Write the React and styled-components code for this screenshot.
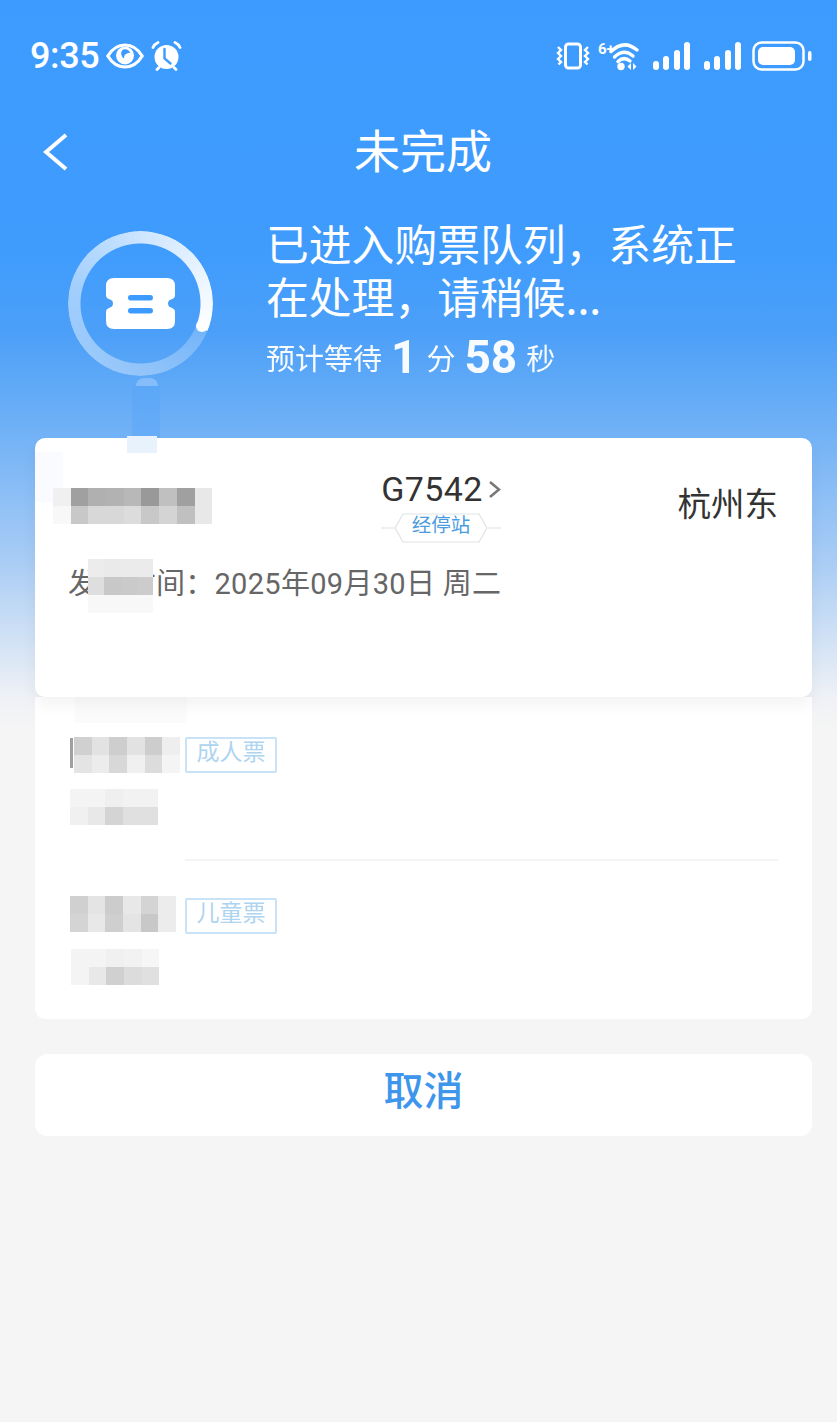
import React from "react";
import styled, { createGlobalStyle } from "styled-components";

const GlobalStyle = createGlobalStyle`
  html, body { margin: 0; padding: 0; }
  body {
    background: #f5f5f5;
    font-family: Roboto, "Noto Sans CJK SC", sans-serif;
  }
`;

const EyeIcon = () => (
  <svg width="38" height="26" viewBox="0 0 38 26">
    <path d="M1.800 13C6 6 12 2 19 2s13 4 17.200 11C32 20 26 24 19 24S6 20 1.800 13z" fill="none" stroke="#fff" strokeWidth="3.200" />
    <circle cx="19" cy="12.500" r="9" fill="#fff" />
    <path d="M17 6.500a6.500 6.500 0 0 1 7.500 3.500a4.500 4.500 0 0 0-3.500.5 4 4 0 0 0-2.800 5 5.500 5.500 0 0 1-1.200-9z" fill="#3d9bff" />
  </svg>
);

const AlarmIcon = () => (
  <svg width="31" height="30" viewBox="0 0 31 30">
    <circle cx="15.500" cy="16" r="12" fill="#fff" />
    <path d="M13.500 8v9.500l6 5" fill="none" stroke="#3d9bff" strokeWidth="2.400" strokeLinecap="round" />
    <path d="M2 6.500Q3.500 3 7 1.500M29 6.500Q27.500 3 24 1.500" fill="none" stroke="#fff" strokeWidth="2.800" strokeLinecap="round" />
    <path d="M6 28.500l2-2M25 28.500l-2-2" stroke="#fff" strokeWidth="2.800" strokeLinecap="round" />
  </svg>
);

const VibrateIcon = () => (
  <svg width="34" height="28" viewBox="0 0 34 28">
    <rect x="9.500" y="2" width="15" height="24" rx="3" fill="none" stroke="#fff" strokeWidth="3" />
    <path d="M2 5l3 3-3 3 3 3-3 3 3 3-2.500 2.500M32 5l-3 3 3 3-3 3 3 3-3 3 2.500 2.500" fill="none" stroke="#fff" strokeWidth="2.400" />
  </svg>
);

const WifiIcon = () => (
  <svg width="42" height="30" viewBox="0 0 42 30">
    <text x="0" y="13" fill="#fff" fontSize="15" fontWeight="700" fontFamily="Roboto, sans-serif">6+</text>
    <path d="M13 10.500Q26-2 39 9" fill="none" stroke="#fff" strokeWidth="3.400" strokeLinecap="round" />
    <path d="M16.500 16Q26 7 35 15" fill="none" stroke="#fff" strokeWidth="3.400" strokeLinecap="round" />
    <path d="M20 20.500Q26 15 32 20" fill="none" stroke="#fff" strokeWidth="3.400" strokeLinecap="round" />
    <circle cx="23" cy="25.500" r="3.700" fill="#fff" />
    <path d="M33 22v7l-3.500-3.500zM35 22v7l3.500-3.500z" fill="#fff" />
  </svg>
);

const SignalIcon = () => (
  <svg width="37" height="28" viewBox="0 0 37 28">
    <rect x="0" y="19" width="6" height="9" rx="3" fill="#fff" />
    <rect x="10" y="14" width="6" height="14" rx="3" fill="#fff" />
    <rect x="21" y="8" width="6" height="20" rx="3" fill="#fff" />
    <rect x="31" y="0" width="6" height="28" rx="3" fill="#fff" />
  </svg>
);

const BatteryIcon = () => (
  <svg width="60" height="30" viewBox="0 0 60 30">
    <rect x="1.500" y="1.500" width="50" height="27" rx="8" fill="none" stroke="#fff" strokeWidth="2.500" />
    <rect x="6" y="6" width="37" height="18" rx="5" fill="#fff" />
    <rect x="56" y="10" width="3.500" height="10" rx="1.750" fill="#fff" />
  </svg>
);

const BackIcon = () => (
  <svg width="26" height="38" viewBox="0 0 26 38">
    <path d="M23 2L3 19l20 17" fill="none" stroke="#fff" strokeWidth="4" />
  </svg>
);

const TicketIcon = () => (
  <svg width="69" height="51" viewBox="0 0 69 51">
    <path
      d="M8 0H61Q69 0 69 8V17Q69 20 66 21L63 22.500Q61 25.500 63 28.500L66 30Q69 31 69 34V43Q69 51 61 51H8Q0 51 0 43V34Q0 31 3 30L6 28.500Q8 25.500 6 22.500L3 21Q0 20 0 17V8Q0 0 8 0z"
      fill="#fff"
    />
    <rect x="22" y="17" width="25" height="5.500" rx="2.700" fill="#3d9bff" />
    <rect x="22" y="30" width="25" height="5.500" rx="2.700" fill="#3d9bff" />
  </svg>
);

const StopsBadgeFrame = () => (
  <svg width="124" height="30" viewBox="0 0 124 30">
    <path d="M2 15H15M109 15H122" stroke="#ececec" strokeWidth="1.500" />
    <path d="M24 1H100L108 15L100 29H24L16 15z" fill="#fff" stroke="#dfe3e6" strokeWidth="1.200" />
  </svg>
);

const RIGHT_CHEVRON = (
  <svg width="13" height="19" viewBox="0 0 13 19">
    <path d="M2 2l9 7.500-9 7.500" fill="none" stroke="#777" strokeWidth="2.500" />
  </svg>
);

const stationMosaic = [
  "#f0f0f0", "#a0a0a0", "#b0b0b0", "#b2b2b2", "#b8b8b8", "#999999", "#c0c0c0", "#a0a0a0", "#e8e8e8",
  "#f8f8f8", "#c8c8c8", "#d8d8d8", "#d8d8d8", "#dcdcdc", "#c8c8c8", "#d4d4d4", "#c0c0c0", "#e8e8e8",
];
const dateMosaic = [
  "#ececec", "#eaeaea", "#ebebeb", "#ebebeb",
  "#dedede", "#c8c8c8", "#cacaca", "#cccccc",
  "#f8f8f8", "#f8f8f8", "#f8f8f8", "#f8f8f8",
];
const adultName = [
  "#d0d0d0", "#e2e2e2", "#cecece", "#e2e2e2", "#cdcdcd", "#eeeeee",
  "#e4e4e4", "#ececec", "#d8d8d8", "#f0f0f0", "#dcdcdc", "#f4f4f4",
];
const adultId = [
  "#f4f4f4", "#f4f4f4", "#efefef", "#f2f2f2", "#f2f2f2",
  "#f0f0f0", "#e8e8e8", "#d4d4d4", "#e0e0e0", "#e0e0e0",
];
const childName = [
  "#d0d0d0", "#e4e4e4", "#cccccc", "#e8e8e8", "#d4d4d4", "#ececec",
  "#d4d4d4", "#e8e8e8", "#cfcfcf", "#e4e4e4", "#c8c8c8", "#ececec",
];
const childId = [
  "#f4f4f4", "#f4f4f4", "#f0f0f0", "#f2f2f2", "#f6f6f6",
  "#f4f4f4", "#e8e8e8", "#d0d0d0", "#dcdcdc", "#e0e0e0",
];

const Mosaic = ({ colors, cols, left, top, cell = 17.7, rowHeight = 18 }) => (
  <MosaicGrid $cols={cols} $cell={cell} $rowHeight={rowHeight} $left={left} $top={top}>
    {colors.map((color, i) => (
      <MosaicCell key={i} $color={color} />
    ))}
  </MosaicGrid>
);

const App = () => {
  return (
    <Page>
      <GlobalStyle />
      <StatusBar>
        <StatusGroup>
          <Clock>9:35</Clock>
          <EyeIcon />
          <AlarmIcon />
        </StatusGroup>
        <IconStrip>
          <VibrateIcon />
          <IconSlot $left={8}>
            <WifiIcon />
          </IconSlot>
          <IconSlot $left={13}>
            <SignalIcon />
          </IconSlot>
          <IconSlot $left={14}>
            <SignalIcon />
          </IconSlot>
          <IconSlot $left={11}>
            <BatteryIcon />
          </IconSlot>
        </IconStrip>
      </StatusBar>

      <NavBar>
        <BackButton>
          <BackIcon />
        </BackButton>
        <NavTitle>未完成</NavTitle>
      </NavBar>

      <Hero>
        <Ring>
          <RingTrack />
          <RingCap />
          <TicketIcon />
          <StemDome />
          <Stem />
        </Ring>
        <HeroText>
          <HeroTitle>已进入购票队列，系统正在处理，请稍候...</HeroTitle>
          <WaitLine>
            预计等待<WaitNumber>1</WaitNumber>分<WaitNumber>58</WaitNumber>秒
          </WaitLine>
        </HeroText>
      </Hero>

      <Content>
        <TrainCard>
          <Smear $left={92} $top={-2} $width={30} $height={17} $color="#e8f2fd" />
          <Smear $left={0} $top={14} $width={28} $height={50} $color="#f9fbff" />
          <Route>
            <span />
            <Train>
              <TrainNumber>
                G7542
                {RIGHT_CHEVRON}
              </TrainNumber>
              <StopsBadge>
                <StopsBadgeFrame />
                <StopsLabel>经停站</StopsLabel>
              </StopsBadge>
            </Train>
            <Station>杭州东</Station>
          </Route>
          <DepartDate>发车时间：2025年09月30日 周二</DepartDate>
          <Mosaic colors={stationMosaic} cols={9} left={18} top={50} />
          <Mosaic colors={dateMosaic} cols={4} left={53} top={121} cell={16.300} />
        </TrainCard>

        <PassengerPanel>
          <Smear $left={40} $top={-14} $width={112} $height={40} $color="#fbfbfb" />
          <Passenger>
            <TicketType>成人票</TicketType>
          </Passenger>
          <Divider />
          <Passenger>
            <TicketType>儿童票</TicketType>
          </Passenger>
          <Fleck />
          <Mosaic colors={adultName} cols={6} left={39} top={40} />
          <Mosaic colors={adultId} cols={5} left={35} top={92} />
          <Mosaic colors={childName} cols={6} left={35} top={199} />
          <Mosaic colors={childId} cols={5} left={36} top={252} />
        </PassengerPanel>

        <CancelButton>取消</CancelButton>
      </Content>
    </Page>
  );
};

export default App;

const Page = styled.div`
  min-height: 1422px;
  background: linear-gradient(
    to bottom,
    #3d9bff 0,
    #3f9cfd 250px,
    #4b9ff8 330px,
    #70b1f6 430px,
    #aacdf5 563px,
    #dde8f5 663px,
    #eff1f6 697px,
    #f5f5f5 730px
  );
`;

const StatusBar = styled.div`
  height: 112px;
  padding: 0 25px 0 30px;
  box-sizing: border-box;
  display: flex;
  align-items: center;
  justify-content: space-between;
`;

const StatusGroup = styled.div`
  display: flex;
  align-items: center;
  gap: 7px;
`;

const IconStrip = styled.div`
  display: flex;
  align-items: center;
`;

const IconSlot = styled.div`
  display: flex;
  margin-left: ${(p) => p.$left}px;
`;

const Clock = styled.span`
  font-family: Roboto, sans-serif;
  font-size: 36px;
  font-weight: 500;
  letter-spacing: -0.4px;
  color: #fff;
  line-height: 1;
`;

const NavBar = styled.div`
  position: relative;
  height: 80px;
  padding: 0 0 9px 9px;
  box-sizing: border-box;
  display: flex;
  align-items: center;
  justify-content: center;
`;

const BackButton = styled.div`
  position: absolute;
  left: 43px;
  top: 21px;
  display: flex;
`;

const NavTitle = styled.h1`
  margin: 0;
  font-family: "Noto Sans CJK SC", sans-serif;
  font-size: 46px;
  font-weight: 400;
  color: #fff;
`;

const Hero = styled.div`
  height: 246px;
  padding: 24px 60px 0 68px;
  box-sizing: border-box;
  display: flex;
  gap: 53px;
`;

const Ring = styled.div`
  position: relative;
  flex: none;
  width: 145px;
  height: 145px;
  margin-top: 15px;
  display: flex;
  align-items: center;
  justify-content: center;
`;

const RingTrack = styled.div`
  position: absolute;
  inset: 0;
  border-radius: 50%;
  background: conic-gradient(
    from 112deg,
    rgba(255, 255, 255, 0.22) 0deg,
    rgba(255, 255, 255, 0.35) 70deg,
    rgba(255, 255, 255, 0.5) 170deg,
    rgba(255, 255, 255, 0.75) 250deg,
    rgba(255, 255, 255, 0.95) 340deg,
    #fff 360deg
  );
  mask: radial-gradient(circle, transparent 59.500px, #000 60.500px);
`;

const RingCap = styled.div`
  position: absolute;
  left: 128px;
  top: 89px;
  width: 12px;
  height: 12px;
  border-radius: 50%;
  background: #fff;
`;

const StemDome = styled.div`
  position: absolute;
  left: 68px;
  top: 147px;
  width: 22px;
  height: 8px;
  border-radius: 11px 11px 0 0;
  background: rgba(190, 220, 255, 0.4);
`;

const Stem = styled.div`
  position: absolute;
  left: 64px;
  top: 155px;
  width: 28px;
  height: 52px;
  background: linear-gradient(to bottom, rgba(61, 150, 250, 0.12), rgba(61, 150, 250, 0.22));
`;

const HeroText = styled.div`
  display: flex;
  flex-direction: column;
`;

const HeroTitle = styled.div`
  font-family: "Noto Sans CJK SC", sans-serif;
  font-size: 42.800px;
  line-height: 53px;
  color: #fff;
`;

const WaitLine = styled.div`
  display: flex;
  align-items: center;
  height: 70px;
  font-family: "Noto Sans CJK SC", sans-serif;
  font-size: 29px;
  color: #fff;
  opacity: 0.96;
`;

const WaitNumber = styled.span`
  font-family: Roboto, sans-serif;
  font-size: 46px;
  font-weight: 700;
  margin: 0 9px;
`;

const Content = styled.div`
  margin: 0 25px 0 35px;
  display: flex;
  flex-direction: column;
`;

const TrainCard = styled.div`
  position: relative;
  z-index: 1;
  height: 259px;
  padding: 0 34px 0 33px;
  box-sizing: border-box;
  background: #fff;
  border-radius: 10px;
  box-shadow: 0 8px 16px rgba(0, 0, 0, 0.05);
`;

const Route = styled.div`
  display: grid;
  grid-template-columns: 1fr auto 1fr;
  padding-top: 30px;
`;

const Train = styled.div`
  margin-left: 36px;
  display: flex;
  flex-direction: column;
  align-items: center;
`;

const TrainNumber = styled.div`
  display: flex;
  align-items: center;
  gap: 5px;
  height: 42px;
  font-family: Roboto, sans-serif;
  font-size: 34px;
  letter-spacing: 0.4px;
  color: #333;
`;

const StopsBadge = styled.div`
  position: relative;
  display: flex;
  height: 30px;
  margin-top: 3px;
`;

const StopsLabel = styled.span`
  position: absolute;
  inset: -10px 0 0;
  display: flex;
  align-items: center;
  justify-content: center;
  font-family: "Noto Sans CJK SC", sans-serif;
  font-size: 19.500px;
  color: #4a9ce0;
`;

const Station = styled.div`
  justify-self: end;
  margin-top: 12px;
  font-family: "Noto Sans CJK SC", sans-serif;
  font-size: 33.500px;
  line-height: 44px;
  color: #333;
`;

const DepartDate = styled.div`
  margin-top: 22px;
  font-family: Roboto, "Noto Sans CJK SC", sans-serif;
  font-size: 29px;
  letter-spacing: 0.3px;
  line-height: 38px;
  color: #666;
`;

const MosaicGrid = styled.div`
  position: absolute;
  left: ${(p) => p.$left}px;
  top: ${(p) => p.$top}px;
  display: grid;
  grid-template-columns: repeat(${(p) => p.$cols}, ${(p) => p.$cell}px);
  grid-auto-rows: ${(p) => p.$rowHeight}px;
`;

const MosaicCell = styled.div`
  background: ${(p) => p.$color};
`;

const Smear = styled.div`
  position: absolute;
  left: ${(p) => p.$left}px;
  top: ${(p) => p.$top}px;
  width: ${(p) => p.$width}px;
  height: ${(p) => p.$height}px;
  background: ${(p) => p.$color};
`;

const Fleck = styled.div`
  position: absolute;
  left: 35px;
  top: 41px;
  width: 3px;
  height: 30px;
  background: #a0a0a0;
`;

const PassengerPanel = styled.div`
  position: relative;
  height: 322px;
  padding: 40px 34px 0 150px;
  box-sizing: border-box;
  background: #fff;
  border-radius: 0 0 10px 10px;
`;

const Passenger = styled.div`
  display: flex;
  height: 122px;
`;

const TicketType = styled.span`
  width: 92px;
  height: 36px;
  padding-bottom: 11px;
  box-sizing: border-box;
  display: flex;
  align-items: center;
  justify-content: center;
  border: 2px solid #c8e3f8;
  border-radius: 2px;
  font-family: "Noto Sans CJK SC", sans-serif;
  font-size: 23px;
  color: #aed4f1;
`;

const Divider = styled.div`
  height: 2px;
  margin-bottom: 37px;
  background: #f2f4f6;
`;

const CancelButton = styled.button`
  height: 82px;
  margin-top: 35px;
  padding: 0 0 15px;
  border: none;
  border-radius: 12px;
  background: #fff;
  font-family: "Noto Sans CJK SC", sans-serif;
  font-size: 40px;
  font-weight: 500;
  color: #3d96ec;
`;
